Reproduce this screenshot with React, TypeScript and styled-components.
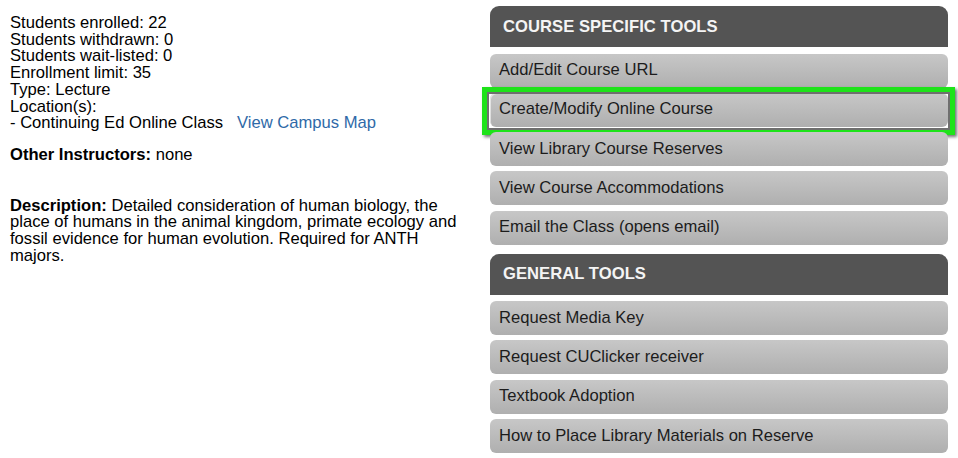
import React from 'react'
import styled, { createGlobalStyle } from 'styled-components'

const GlobalStyle = createGlobalStyle`
  html, body {
    margin: 0;
    padding: 0;
    background: #ffffff;
  }
  body {
    font-family: 'Liberation Sans', Arial, Helvetica, sans-serif;
    font-size: 16.6px;
    color: #000;
  }
`

const Page = styled.div`
  display: flex;
  align-items: flex-start;
  width: 958px;
  height: 458px;
  overflow: hidden;
  padding: 6px 0 0 10px;
  box-sizing: border-box;
`

const Details = styled.div`
  width: 465px;
  padding-top: 9px;
  line-height: 16.7px;
  margin-right: 15px;
`

const Line = styled.div``

const Spacer = styled.div<{ $height: number }>`
  height: ${({ $height }) => $height}px;
`

const MapLink = styled.a`
  color: #2f6aa8;
  text-decoration: none;
  margin-left: 14px;
  cursor: pointer;
`

const Label = styled.b`
  font-weight: bold;
`

const Tools = styled.div`
  width: 458px;
  display: flex;
  flex-direction: column;
`

const SectionHeader = styled.div`
  height: 41px;
  display: flex;
  align-items: center;
  padding-left: 13px;
  background: #545454;
  color: #f4f4f4;
  font-weight: bold;
  border-radius: 9px 9px 0 0;
  margin-bottom: 6.5px;
  letter-spacing: 0.05px;
`

const ToolList = styled.div`
  display: flex;
  flex-direction: column;
  gap: 5.3px;
  margin-bottom: 9px;
`

const ToolButton = styled.a<{ $highlighted?: boolean }>`
  position: relative;
  box-sizing: border-box;
  display: flex;
  align-items: center;
  height: 34px;
  padding: 0 9px 1px;
  border-radius: 6px;
  background: linear-gradient(#c7c7c7, #afafaf);
  color: #1c1c1c;
  cursor: pointer;
  box-shadow: ${({ $highlighted }) =>
    $highlighted ? 'inset 1px 1px 0 rgba(255,255,255,0.55)' : 'none'};

  ${({ $highlighted }) =>
    $highlighted &&
    `
    &::after {
      content: '';
      position: absolute;
      left: -8px;
      right: -7px;
      top: -6px;
      bottom: -8px;
      border: 5px solid #1ee31a;
      box-shadow: inset 0 0 0 2px #6f6f6f, 2px 2px 3px rgba(0, 0, 0, 0.55);
      pointer-events: none;
    }
  `}
`

const courseTools = [
  { label: 'Add/Edit Course URL' },
  { label: 'Create/Modify Online Course', highlighted: true },
  { label: 'View Library Course Reserves' },
  { label: 'View Course Accommodations' },
  { label: 'Email the Class (opens email)' },
]

const generalTools = [
  { label: 'Request Media Key' },
  { label: 'Request CUClicker receiver' },
  { label: 'Textbook Adoption' },
  { label: 'How to Place Library Materials on Reserve' },
]

type Tool = { label: string; highlighted?: boolean }

const ToolSection = ({ title, tools }: { title: string; tools: Tool[] }) => (
  <>
    <SectionHeader>{title}</SectionHeader>
    <ToolList>
      {tools.map(tool => (
        <ToolButton key={tool.label} $highlighted={tool.highlighted}>
          {tool.label}
        </ToolButton>
      ))}
    </ToolList>
  </>
)

const App = () => {
  return (
    <>
      <GlobalStyle />
      <Page>
        <Details>
          <Line>Students enrolled: 22</Line>
          <Line>Students withdrawn: 0</Line>
          <Line>Students wait-listed: 0</Line>
          <Line>Enrollment limit: 35</Line>
          <Line>Type: Lecture</Line>
          <Line>Location(s):</Line>
          <Line>
            - Continuing Ed Online Class
            <MapLink>View Campus Map</MapLink>
          </Line>
          <Spacer $height={15} />
          <Line>
            <Label>Other Instructors:</Label> none
          </Line>
          <Spacer $height={34} />
          <Line>
            <Label>Description:</Label> Detailed consideration of human
            biology, the place of humans in the animal kingdom, primate ecology
            and fossil evidence for human evolution. Required for ANTH majors.
          </Line>
        </Details>
        <Tools>
          <ToolSection title="COURSE SPECIFIC TOOLS" tools={courseTools} />
          <ToolSection title="GENERAL TOOLS" tools={generalTools} />
        </Tools>
      </Page>
    </>
  )
}

export default App
